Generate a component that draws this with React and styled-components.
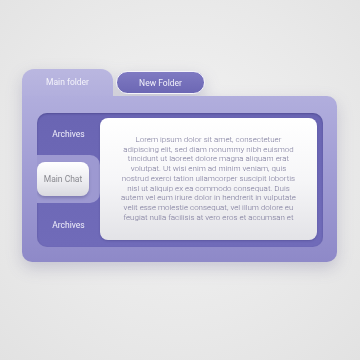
import React from 'react';
import styled, { createGlobalStyle } from 'styled-components';

const GlobalStyle = createGlobalStyle`
  html, body {
    margin: 0;
    padding: 0;
  }
  body {
    font-family: Roboto, "Liberation Sans", sans-serif;
  }
`

const Page = styled.div`
  width: 360px;
  height: 360px;
  box-sizing: border-box;
  padding: 69px 0 0 22px;
  background: radial-gradient(circle at 50% 45%, #f3f3f3 0%, #e9e9e9 60%, #e2e2e2 100%);
`

const Folder = styled.div`
  width: 315px;
  display: flex;
  flex-direction: column;
  filter: drop-shadow(0 6px 8px rgba(70, 66, 120, 0.22));
`

const TabRow = styled.div`
  display: flex;
  align-items: flex-start;
  height: 27px;
`

const ActiveTab = styled.div`
  width: 91px;
  height: 27px;
  border-radius: 12px 12px 0 0;
  background: linear-gradient(180deg, #bab7e0 0%, #b2afdd 100%);
  color: #f4f3fb;
  font-size: 8.5px;
  display: flex;
  align-items: center;
  justify-content: center;
  padding-bottom: 1px;
  box-sizing: border-box;
`

const PillTab = styled.div`
  margin: 2px 0 0 3px;
  width: 89px;
  height: 23px;
  box-sizing: border-box;
  border-radius: 12px;
  border: 1.5px solid #f4f3fa;
  background: linear-gradient(180deg, #7f7ac2 0%, #6c67b4 100%);
  color: #f2f1fb;
  font-size: 8.5px;
  display: flex;
  align-items: center;
  justify-content: center;
`

const Body = styled.div`
  height: 166px;
  box-sizing: border-box;
  padding: 17px 14px 15px 15px;
  border-radius: 0 10px 10px 10px;
  background: linear-gradient(180deg, #b1aedd 0%, #9f9bd3 50%, #8e89c8 100%);
`

const Panel = styled.div`
  height: 134px;
  display: flex;
  border-radius: 10px;
  background: linear-gradient(180deg, #6a65b3 0%, #706bb9 100%);
  box-shadow: inset 0 1px 2px rgba(40, 36, 100, 0.35);
  overflow: hidden;
`

const SideColumn = styled.div`
  width: 63px;
  display: flex;
  flex-direction: column;
`

const SideTab = styled.div`
  height: ${p => p.$h}px;
  display: flex;
  align-items: center;
  justify-content: center;
  color: #f1f0fb;
  font-size: 8.5px;
`

const Slot = styled.div`
  height: 48px;
  display: flex;
  align-items: center;
  padding-right: 6px;
  background: #9d99d1;
  border-radius: 0 10px 10px 0;
`

const ChatButton = styled.div`
  width: 52px;
  height: 34px;
  border-radius: 8px;
  background: linear-gradient(180deg, #ffffff 0%, #ebebef 60%, #d9d9df 100%);
  box-shadow: 0 2px 3px rgba(60, 56, 110, 0.3);
  color: #8a8a90;
  font-size: 8.5px;
  display: flex;
  align-items: center;
  justify-content: center;
`

const Content = styled.div`
  flex: 1;
  margin: 5px 6px 7px 0;
  border-radius: 8px;
  background: linear-gradient(180deg, #ffffff 0%, #f6f6f8 50%, #e3e3e7 100%);
  box-shadow: 0 1px 2px rgba(50, 46, 110, 0.3);
  display: flex;
  justify-content: center;
  padding-top: 17px;
  box-sizing: border-box;
`

const Lorem = styled.p`
  margin: 0;
  text-align: center;
  white-space: nowrap;
  color: #7a7799;
  font-size: 8px;
  font-weight: 300;
  line-height: 9.7px;
`

const lines = [
  'Lorem ipsum dolor sit amet, consectetuer',
  'adipiscing elit, sed diam nonummy nibh euismod',
  'tincidunt ut laoreet dolore magna aliquam erat',
  'volutpat. Ut wisi enim ad minim veniam, quis',
  'nostrud exerci tation ullamcorper suscipit lobortis',
  'nisl ut aliquip ex ea commodo consequat. Duis',
  'autem vel eum iriure dolor in hendrerit in vulputate',
  'velit esse molestie consequat, vel illum dolore eu',
  'feugiat nulla facilisis at vero eros et accumsan et',
]

const App = () => (
  <Page>
    <GlobalStyle />
    <Folder>
      <TabRow>
        <ActiveTab>Main folder</ActiveTab>
        <PillTab>New Folder</PillTab>
      </TabRow>
      <Body>
        <Panel>
          <SideColumn>
            <SideTab $h={42}>Archives</SideTab>
            <Slot>
              <ChatButton>Main Chat</ChatButton>
            </Slot>
            <SideTab $h={44}>Archives</SideTab>
          </SideColumn>
          <Content>
            <Lorem>
              {lines.map((line, i) => (
                <React.Fragment key={i}>
                  {line}
                  {i < lines.length - 1 && <br />}
                </React.Fragment>
              ))}
            </Lorem>
          </Content>
        </Panel>
      </Body>
    </Folder>
  </Page>
)

export default App
